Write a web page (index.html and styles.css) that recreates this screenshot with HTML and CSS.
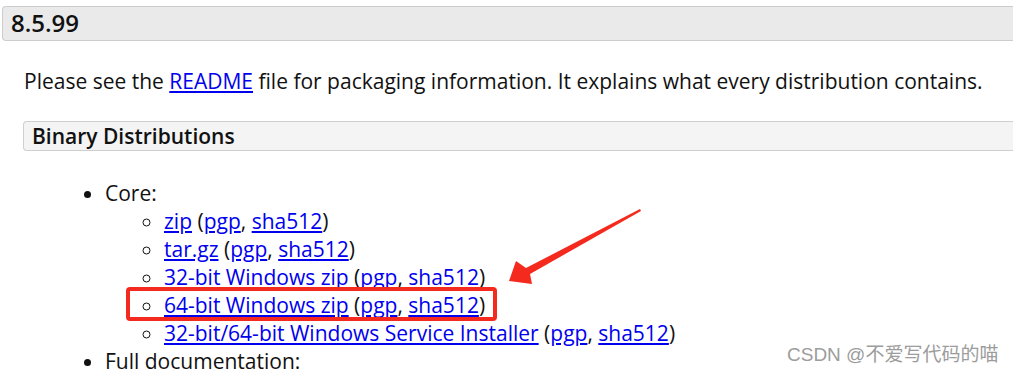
FILE: index.html
```html
<!DOCTYPE html>
<html lang="en">
<head>
    <meta charset="UTF-8">
    <title>Tomcat 8.5.99</title>
    <link rel="stylesheet" href="styles.css">
</head>
<body>
    <div class="page">
        <h3 class="version">8.5.99</h3>

        <p class="intro">Please see the <a href="#">README</a> file for packaging information. It explains what every distribution contains.</p>

        <h4 class="section">Binary Distributions</h4>

        <ul class="dist">
            <li>Core:
                <ul class="files">
                    <li><a href="#">zip</a> (<a href="#">pgp</a>, <a href="#">sha512</a>)</li>
                    <li><a href="#">tar.gz</a> (<a href="#">pgp</a>, <a href="#">sha512</a>)</li>
                    <li><a href="#">32-bit Windows zip</a> (<a href="#">pgp</a>, <a href="#">sha512</a>)</li>
                    <li><a href="#">64-bit Windows zip</a> (<a href="#">pgp</a>, <a href="#">sha512</a>)</li>
                    <li><a href="#">32-bit/64-bit Windows Service Installer</a> (<a href="#">pgp</a>, <a href="#">sha512</a>)</li>
                </ul>
            </li>
            <li>Full documentation:</li>
        </ul>

        <!-- screenshot annotations -->
        <div class="mark"></div>
        <svg class="arrow" width="1013" height="374" viewBox="0 0 1013 374">
            <polygon points="640,209 641,211 530,274 532,284 509,281 516,261 526,268" fill="#f52a1f"/>
        </svg>
        <div class="watermark">CSDN @不爱写代码的喵</div>
    </div>
</body>
</html>
```

FILE: styles.css
```css
* {
    margin: 0;
    padding: 0;
    box-sizing: border-box;
}

body {
    background: white;
    font-family: 'Open Sans', sans-serif;
    color: #111;
    overflow: hidden;
}

.page {
    position: relative;
    width: 1013px;
    height: 374px;
    padding-top: 6px;
}

a {
    color: #0000ee;
}

.version {
    margin-left: 2px;
    height: 35px;
    padding-left: 8px;
    background: #eaeaea;
    border: 1px solid #cdcdcd;
    border-right: none;
    border-radius: 4px 0 0 4px;
    font-size: 24px;
    line-height: 32px;
    font-weight: 600;
}

.intro {
    margin-top: 26px;
    padding-left: 24px;
    font-size: 21px;
    line-height: 28px;
}

.section {
    margin: 26px 0 0 23px;
    height: 30px;
    padding-left: 8px;
    background: #f4f4f4;
    border: 1px solid #cfcfcf;
    border-right: none;
    border-radius: 4px 0 0 4px;
    font-size: 21px;
    line-height: 29px;
    font-weight: 600;
}

.dist {
    margin-top: 28px;
    padding-left: 105px;
    font-size: 21px;
    line-height: 28px;
}

.files {
    list-style: circle;
    padding-left: 59px;
}

.mark {
    position: absolute;
    left: 126px;
    top: 287px;
    width: 371px;
    height: 34px;
    border: 4px solid #f52a1f;
    border-radius: 4px;
}

.arrow {
    position: absolute;
    left: 0;
    top: 0;
    pointer-events: none;
}

.watermark {
    position: absolute;
    left: 787px;
    top: 345px;
    font-family: 'Liberation Sans', 'Noto Sans CJK SC', sans-serif;
    font-size: 19px;
    line-height: 20px;
    color: #9c9c9c;
}
```
